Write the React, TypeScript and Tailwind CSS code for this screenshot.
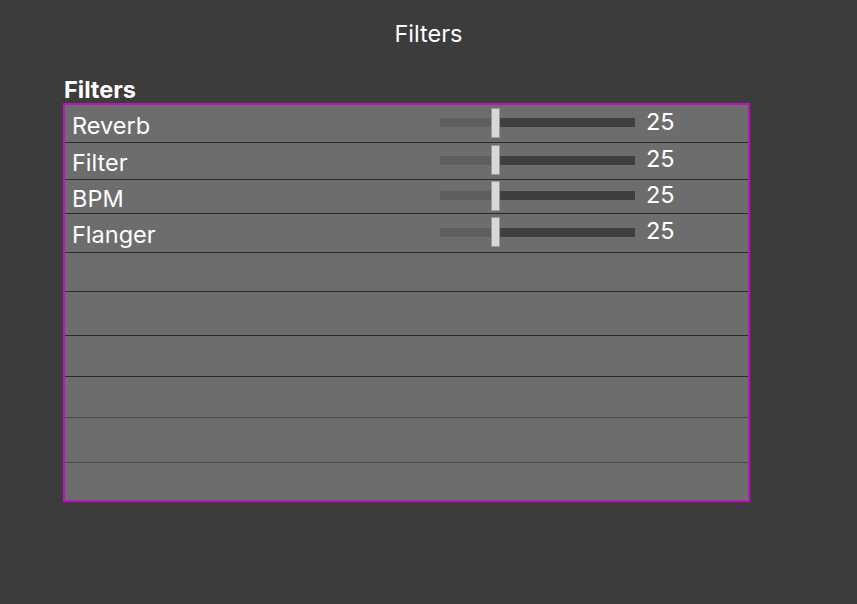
import React from "react";

const filters = [
  { name: "Reverb", value: 25, h: "h-[37px]" },
  { name: "Filter", value: 25, h: "h-[37px]" },
  { name: "BPM", value: 25, h: "h-[34px]" },
  { name: "Flanger", value: 25, h: "h-[39px]" },
];

const emptyRows = [
  { h: "h-[39px]", line: "border-[#2b2b2b]" },
  { h: "h-[44px]", line: "border-[#2b2b2b]" },
  { h: "h-[41px]", line: "border-[#2b2b2b]" },
  { h: "h-[41px]", line: "border-[#2b2b2b]" },
  { h: "h-[45px]", line: "border-[#4a4a4a]" },
  { h: "h-[38px]", line: "border-[#4a4a4a]" },
];

function Slider({ value }: { value: number }) {
  return (
    <div className="relative w-[195px] h-[30px] flex items-center">
      <div className="flex w-full h-[9px]">
        <div className="h-full bg-[#5e5e5e]" style={{ width: `${(value / 100) * 195 + 3}px` }} />
        <div className="h-full flex-1 bg-[#3f3f3f]" />
      </div>
      <div
        className="absolute top-0 h-[30px] w-[9px] bg-[#d8d8d8] border border-[#9a9a9a]"
        style={{ left: `${(value / 100) * 195 + 2}px` }}
      />
    </div>
  );
}

export default function App() {
  return (
    <div className="w-[857px] h-[604px] bg-[#3c3c3c] text-white font-['Inter',sans-serif]">
      <div className="pt-[19px] text-center text-[23.5px] leading-[30px]">Filters</div>
      <div className="pl-[64px] pt-[28px] text-[23.5px] font-bold leading-[26px]">Filters</div>
      <div className="ml-[63px] w-[687px] border-2 border-[#c010c0] bg-[#6d6d6d]">
        {filters.map((f, i) => (
          <div
            key={f.name}
            className={`${f.h} flex items-center ${i > 0 ? "border-t border-[#2b2b2b]" : ""}`}
          >
            <div className="w-[375px] pl-[7px] text-[23.5px] leading-none pt-[4px]">{f.name}</div>
            <div className="-mt-[2px]">
              <Slider value={f.value} />
            </div>
            <div className="pl-[11px] text-[23.5px] leading-none -mt-[4px]">{f.value}</div>
          </div>
        ))}
        {emptyRows.map((r, i) => (
          <div key={i} className={`${r.h} border-t ${r.line}`} />
        ))}
      </div>
    </div>
  );
}
